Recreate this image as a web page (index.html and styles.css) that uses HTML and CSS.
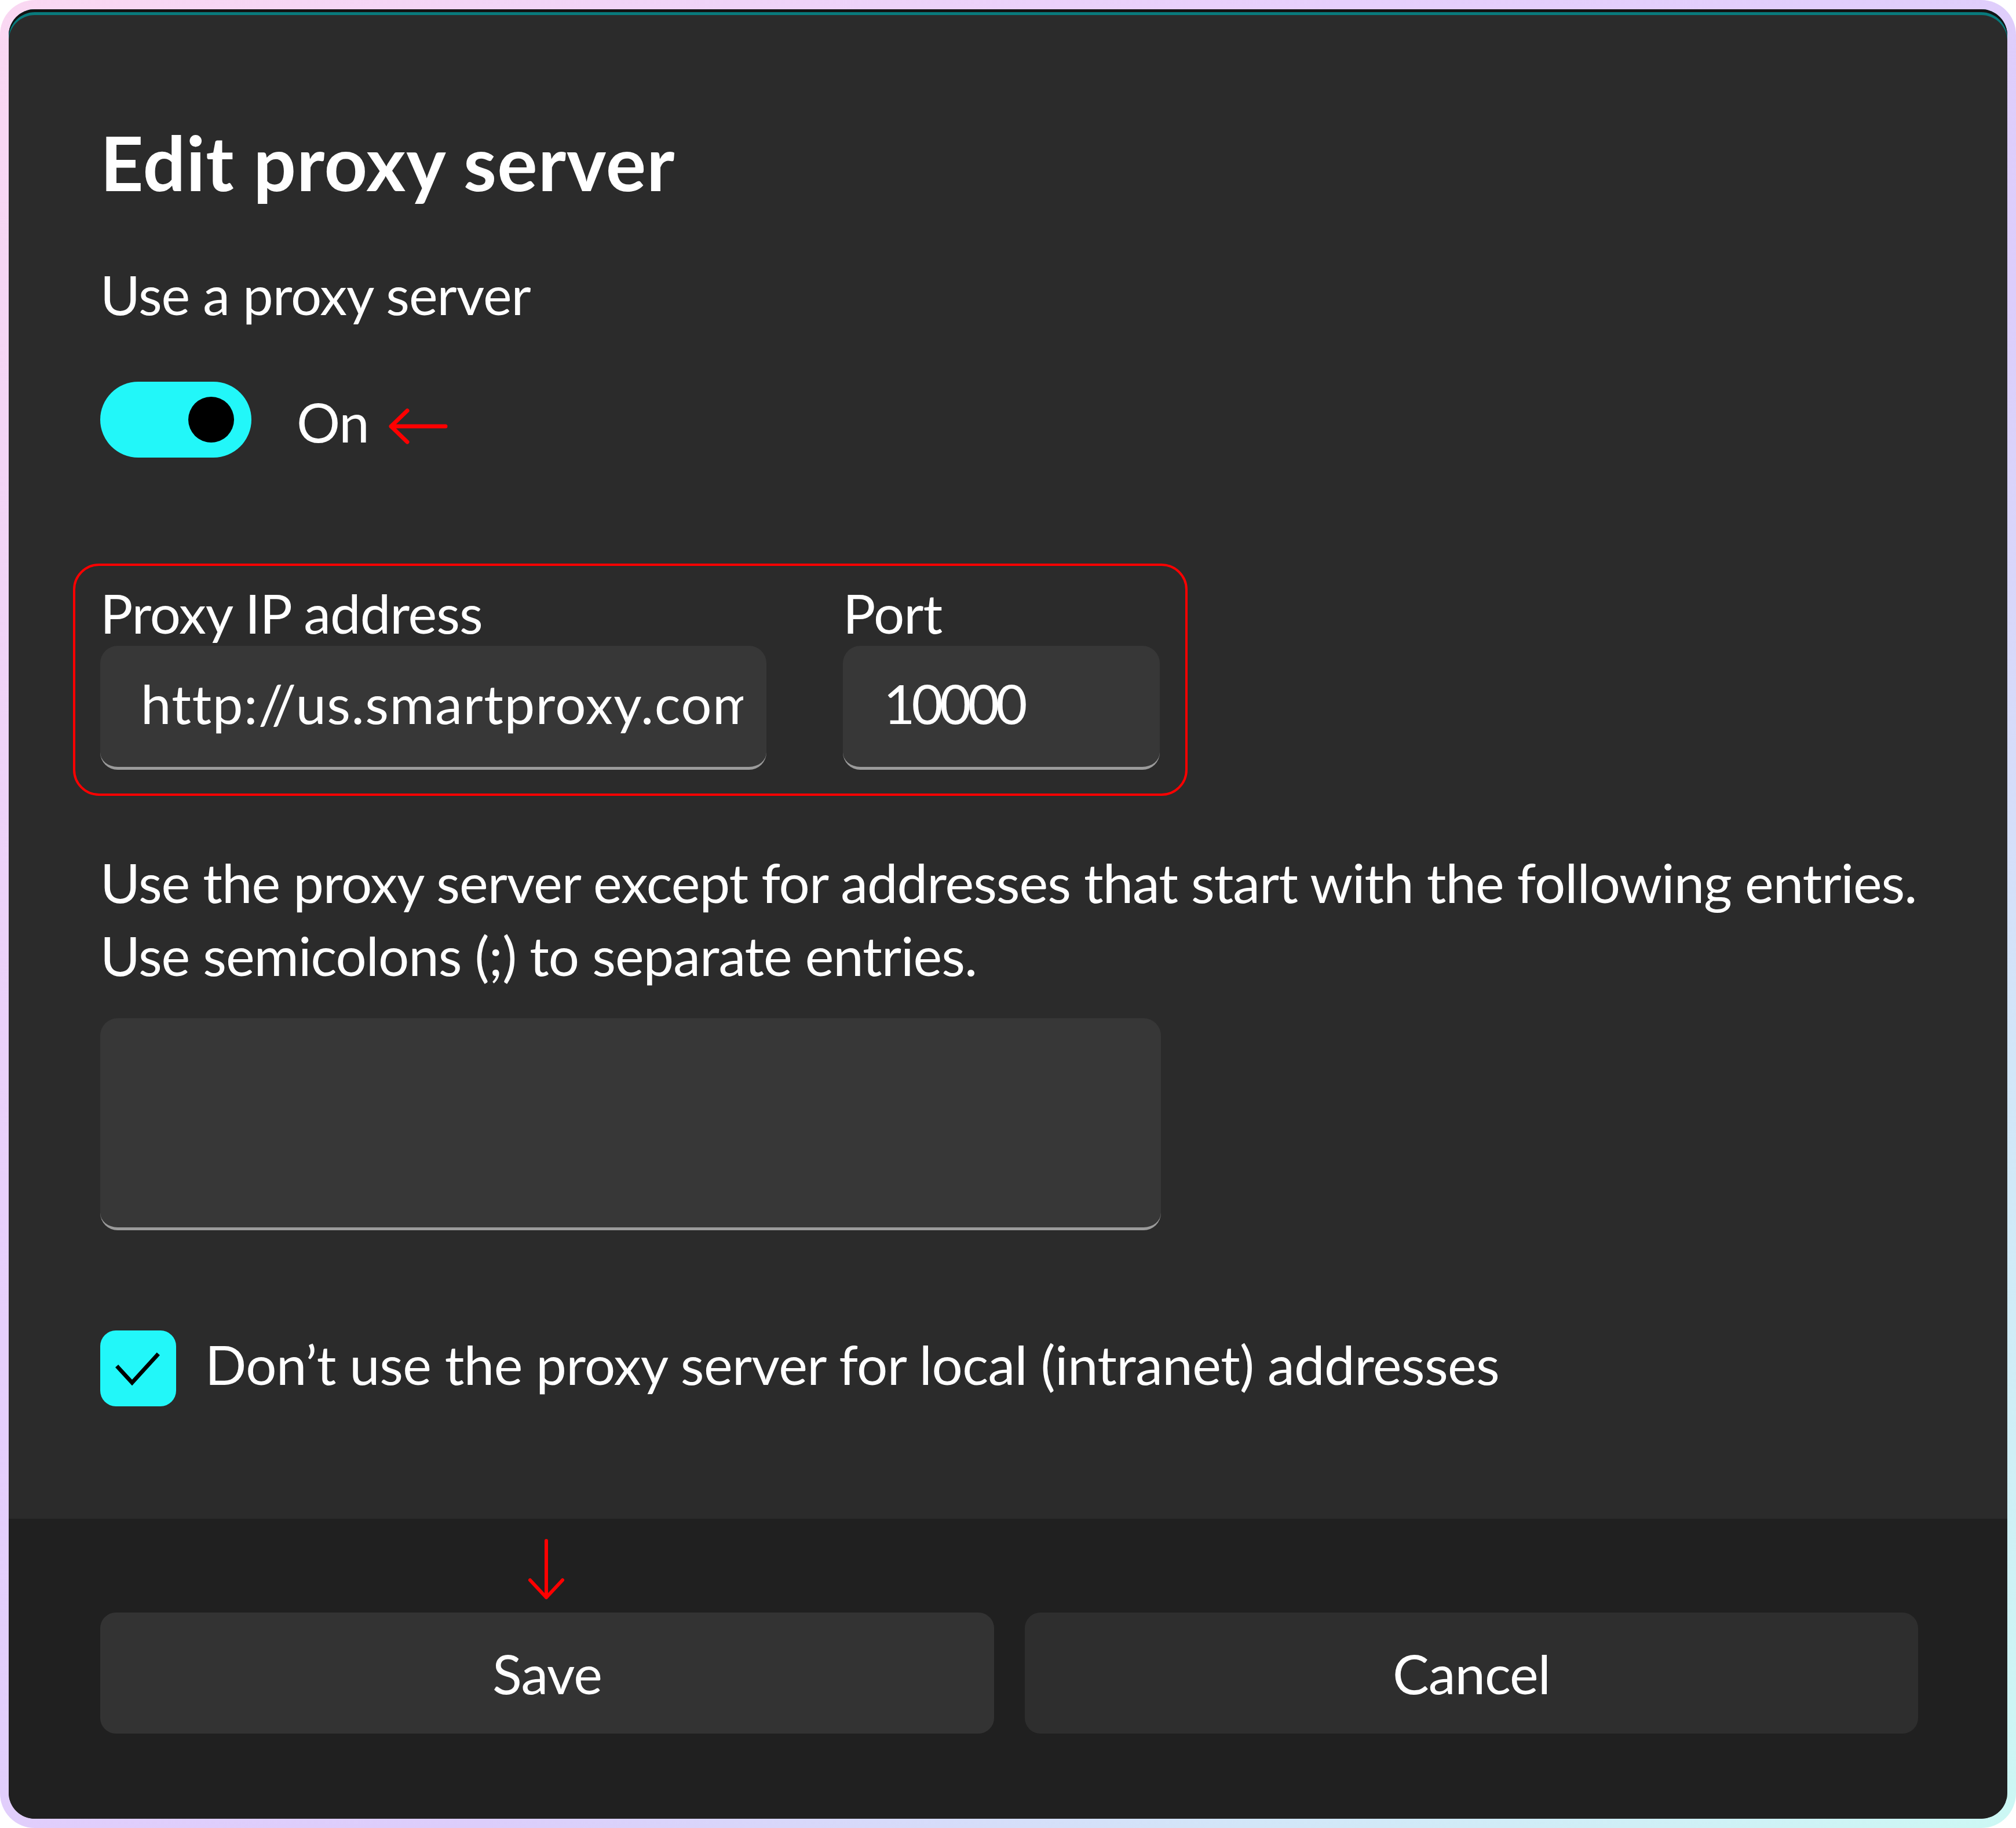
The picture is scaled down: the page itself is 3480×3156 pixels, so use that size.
FILE: index.html
```html
<!DOCTYPE html>
<html lang="en">
<head>
<meta charset="utf-8">
<title>Edit proxy server</title>
<link rel="stylesheet" href="styles.css">
</head>
<body>
<div class="frame">
  <div class="dialog">
    <div class="content">
      <h1 class="title">Edit proxy server</h1>
      <div class="label-main">Use a proxy server</div>
      <div class="toggle-row">
        <div class="toggle"><div class="knob"></div></div>
        <span class="toggle-text">On</span>
        <svg class="arrow-left" viewBox="0 0 105 62" aria-hidden="true">
          <path d="M6 31 H100 M34 4 L6 31 L34 58" fill="none" stroke="#ff0000" stroke-width="7" stroke-linecap="round" stroke-linejoin="round"/>
        </svg>
      </div>
      <div class="highlight">
        <div class="field field-ip">
          <div class="field-label">Proxy IP address</div>
          <div class="input"><span class="input-text input-text-ip">http://us.smartproxy.com</span></div>
        </div>
        <div class="field field-port">
          <div class="field-label">Port</div>
          <div class="input"><span class="input-text input-text-port">10000</span></div>
        </div>
      </div>
      <p class="desc">
        <span class="desc-line">Use the proxy server except for addresses that start with the following entries.</span>
        <span class="desc-line">Use semicolons (;) to separate entries.</span>
      </p>
      <div class="textarea"></div>
      <div class="check-row">
        <div class="checkbox">
          <svg class="check-mark" viewBox="0 0 131 131" aria-hidden="true">
            <path d="M31 64 L55 90 L98 43" fill="none" stroke="#000" stroke-width="7" stroke-linecap="square" stroke-linejoin="miter"/>
          </svg>
        </div>
        <span class="check-label">Don’t use the proxy server for local (intranet) addresses</span>
      </div>
    </div>
    <div class="footer">
      <svg class="arrow-down" viewBox="0 0 64 108" aria-hidden="true">
        <path d="M32 4 V102 M4 72 L32 102 L60 72" fill="none" stroke="#ff0000" stroke-width="6" stroke-linecap="round" stroke-linejoin="round"/>
      </svg>
      <div class="btn btn-save">Save</div>
      <div class="btn btn-cancel">Cancel</div>
    </div>
  </div>
</div>
</body>
</html>
```

FILE: styles.css
```css
html, body {
  margin: 0;
  padding: 0;
  background: #ffffff;
}

body {
  width: 3480px;
  height: 3156px;
  font-family: "Lato", "Open Sans", sans-serif;
  color: #ffffff;
}

.frame {
  box-sizing: border-box;
  width: 3480px;
  height: 3156px;
  border-radius: 60px;
  padding: 16px 15px 16px 15px;
  background: linear-gradient(135deg, #fad8f2 0%, #e6cffc 35%, #dccdfb 60%, #d2e6f8 80%, #ccf8f4 100%);
}

.dialog {
  height: 3124px;
  border-radius: 45px;
  background: #2b2b2b;
  box-shadow: inset 0 5px 0 #141414, inset 0 10px 0 #087a7c;
  display: flex;
  flex-direction: column;
  overflow: hidden;
  letter-spacing: -1px;
}

.content {
  flex: 1;
  padding: 184px 0 0 158px;
}

.title {
  margin: 0;
  font-size: 130px;
  font-weight: 700;
  line-height: 160px;
  letter-spacing: 1px;
}

.label-main {
  margin-top: 85px;
  font-size: 94px;
  line-height: 126px;
}

.toggle-row {
  margin-top: 88px;
  height: 131px;
  display: flex;
  align-items: center;
}

.toggle {
  box-sizing: border-box;
  width: 261px;
  height: 131px;
  border-radius: 66px;
  background: #22f7f9;
  display: flex;
  align-items: center;
  justify-content: flex-end;
  padding-right: 30px;
  flex: none;
}

.knob {
  width: 79px;
  height: 79px;
  border-radius: 50%;
  background: #000000;
}

.toggle-text {
  margin-left: 78px;
  margin-top: 6px;
  font-size: 94px;
  line-height: 126px;
}

.arrow-left {
  margin-left: 32px;
  margin-top: 22px;
  width: 105px;
  height: 62px;
  flex: none;
}

.highlight {
  box-sizing: border-box;
  width: 1924px;
  margin: 183px 0 0 -47px;
  border: 4px solid #ff0000;
  border-radius: 45px;
  padding: 31px 44px 41px 43px;
  display: flex;
  gap: 132px;
}

.field-ip {
  width: 1150px;
  flex: none;
}

.field-port {
  width: 547px;
  flex: none;
}

.field-label {
  font-size: 94px;
  line-height: 100px;
  margin-bottom: 7px;
  white-space: nowrap;
}

.input {
  box-sizing: border-box;
  height: 214px;
  background: #373737;
  border-radius: 30px;
  border-bottom: 5px solid #9b9b9b;
  padding: 36px 40px 0 70px;
  font-size: 94px;
  line-height: 126px;
}

.input-text {
  display: block;
  white-space: nowrap;
  overflow: hidden;
}

.input-text-ip {
  letter-spacing: 1.5px;
}

.input-text-port {
  letter-spacing: -6px;
}

.desc {
  margin: 86px 0 0;
  font-size: 94px;
  line-height: 126px;
}

.desc-line {
  display: block;
  white-space: nowrap;
}

.textarea {
  box-sizing: border-box;
  margin-top: 46px;
  width: 1831px;
  height: 366px;
  background: #373737;
  border-radius: 30px;
  border-bottom: 5px solid #9b9b9b;
}

.check-row {
  margin-top: 173px;
  display: flex;
  align-items: flex-start;
}

.checkbox {
  width: 131px;
  height: 131px;
  border-radius: 27px;
  background: #22f7f9;
  flex: none;
}

.check-mark {
  display: block;
  width: 131px;
  height: 131px;
}

.check-label {
  margin-left: 50px;
  margin-top: -5px;
  font-size: 94px;
  line-height: 126px;
  letter-spacing: -0.6px;
  white-space: nowrap;
}

.footer {
  position: relative;
  box-sizing: border-box;
  height: 518px;
  flex: none;
  background: #202020;
  padding: 162px 154px 0 158px;
  display: grid;
  grid-template-columns: 1543px 1542px;
  column-gap: 53px;
  align-content: start;
}

.arrow-down {
  position: absolute;
  left: 896px;
  top: 34px;
  width: 64px;
  height: 108px;
}

.btn {
  height: 209px;
  border-radius: 27px;
  text-align: center;
  font-size: 94px;
  line-height: 209px;
}

.btn-save {
  background: #333333;
}

.btn-cancel {
  background: #2e2e2e;
}
```
